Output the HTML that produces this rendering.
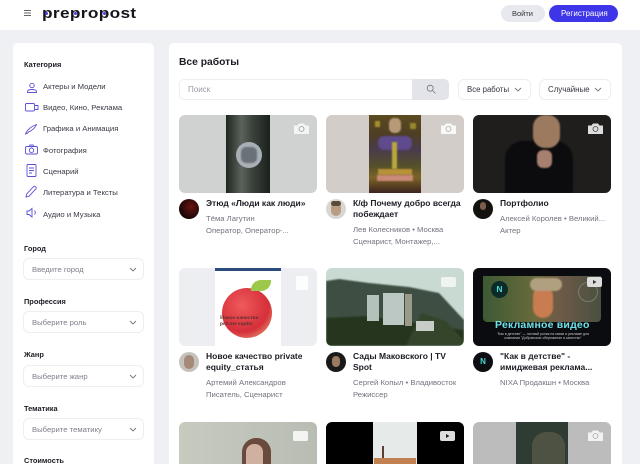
<!DOCTYPE html>
<html><head><meta charset="utf-8">
<style>
*{box-sizing:border-box;margin:0;padding:0}
html,body{width:640px;height:464px;overflow:hidden;background:#eff0f4;font-family:"Liberation Sans",sans-serif}
#w{position:relative;width:640px;height:464px;overflow:hidden;background:#eff0f4}
.a{position:absolute}
.t{position:absolute;white-space:nowrap}
.cat{font-size:7.7px;color:#3a3a44;left:43px}
.lab{font-size:7.4px;font-weight:bold;color:#1c1c24;left:24px}
.sel{position:absolute;left:23px;width:121px;height:22px;background:#fff;border:1px solid #eceef2;border-radius:6px}
.sel span{position:absolute;left:8px;top:5.500px;font-size:7.700px;color:#7d7f8c;white-space:nowrap}
.ch{position:absolute;width:8px;height:5px}
.img{position:absolute;width:138px;height:78px;border-radius:6px;overflow:hidden}
.r3{height:42px;border-radius:6px 6px 0 0}
.ti{font-size:8.500px;font-weight:bold;color:#1c1c24;line-height:11px;position:absolute;white-space:nowrap}
.su{font-size:7.700px;color:#72747f;position:absolute;white-space:nowrap}
.av{position:absolute;width:20px;height:20px;border-radius:50%;overflow:hidden}
svg{display:block}
.ov{position:absolute;right:8px;top:8px}
.b{filter:blur(.7px)}
</style></head><body><div id="w">

<div class="a" style="left:0;top:0;width:640px;height:30px;background:#fff"></div>
<svg class="a" style="left:23px;top:9px" width="9" height="8"><path d="M1 1.500H8M1 4H8M1 6.500H8" stroke="#666" stroke-width=".9"/></svg>
<div class="t" style="left:41.500px;top:4px;font-size:15px;font-weight:bold;color:#15151c;letter-spacing:.3px;line-height:20px;transform:scaleX(1.15);transform-origin:0 0">prepropost</div>
<div class="a" style="left:45px;top:12px;width:3px;height:3px;border-radius:50%;background:#4a40e0"></div>
<div class="a" style="left:73.500px;top:12px;width:3px;height:3px;border-radius:50%;background:#4a40e0"></div>
<div class="a" style="left:102.500px;top:12px;width:3px;height:3px;border-radius:50%;background:#4a40e0"></div>
<div class="a" style="left:501px;top:5px;width:44px;height:17px;border-radius:9px;background:#e8e9ee"></div>
<div class="t" style="left:512px;top:9px;font-size:7.500px;color:#33333d">Войти</div>
<div class="a" style="left:549px;top:5px;width:69px;height:17px;border-radius:9px;background:#3f35e8"></div>
<div class="t" style="left:561px;top:9px;font-size:8px;color:#fff">Регистрация</div>

<!-- sidebar -->
<div class="a" style="left:13px;top:43px;width:141px;height:421px;background:#fff;border-radius:5px 5px 0 0"></div>
<div class="lab t" style="top:60px">Категория</div>
<div class="t cat" style="top:82px">Актеры и Модели</div>
<div class="t cat" style="top:103px">Видео, Кино, Реклама</div>
<div class="t cat" style="top:124px">Графика и Анимация</div>
<div class="t cat" style="top:146px">Фотография</div>
<div class="t cat" style="top:167px">Сценарий</div>
<div class="t cat" style="top:188px">Литература и Тексты</div>
<div class="t cat" style="top:210px">Аудио и Музыка</div>
<svg class="a" style="left:24px;top:79px" width="16" height="148" fill="none" stroke="#5b50d6" stroke-width=".9">
<circle cx="8" cy="6.500" r="2.200"/><path d="M3.500 13.500v-1c0-1.300 2-2 4.500-2s4.500.7 4.500 2v1z"/>
<rect x="1.500" y="24.500" width="9" height="7.500" rx="1.200"/><path d="M10.500 26.500h3.500v4h-3.500"/>
<path d="M1.500 55c2-5 7-8 11-9.500-1.500 3.500-5 6.500-8 7.500-.5 1-1.500 1.500-3 2z"/>
<rect x="1.500" y="67.500" width="12" height="7.500" rx="1.500"/><circle cx="7.500" cy="71.200" r="2.200"/><path d="M5 67.500l1-1.500h3l1 1.500"/>
<rect x="3" y="85.500" width="9" height="12" rx="1"/><path d="M5 89h5M5 91.500h5M5 94h3"/>
<path d="M2 118l.7-3 7-7.500c1-1 3.300 1 2.300 2.200l-7 7.500z"/>
<path d="M3 132v3.500h2l3 2.500v-8.500l-3 2.500zM10.500 131.500c1 1 1 3 0 4"/>
</svg>

<div class="lab t" style="top:244px">Город</div>
<div class="sel" style="top:258px"><span>Введите город</span><svg class="ch" style="right:6px;top:8px" viewBox="0 0 8 5"><path d="M1 1l3 3 3-3" fill="none" stroke="#777" stroke-width=".9"/></svg></div>
<div class="lab t" style="top:297px">Профессия</div>
<div class="sel" style="top:311px"><span>Выберите роль</span><svg class="ch" style="right:6px;top:8px" viewBox="0 0 8 5"><path d="M1 1l3 3 3-3" fill="none" stroke="#777" stroke-width=".9"/></svg></div>
<div class="lab t" style="top:350px">Жанр</div>
<div class="sel" style="top:365px"><span>Выберите жанр</span><svg class="ch" style="right:6px;top:8px" viewBox="0 0 8 5"><path d="M1 1l3 3 3-3" fill="none" stroke="#777" stroke-width=".9"/></svg></div>
<div class="lab t" style="top:404px">Тематика</div>
<div class="sel" style="top:418px"><span>Выберите тематику</span><svg class="ch" style="right:6px;top:8px" viewBox="0 0 8 5"><path d="M1 1l3 3 3-3" fill="none" stroke="#777" stroke-width=".9"/></svg></div>
<div class="a" style="left:24px;top:457px;width:100px;height:7px;overflow:hidden;font-size:7.400px;line-height:7px;font-weight:bold;color:#1c1c24;white-space:nowrap">Стоимость</div>

<!-- main -->
<div class="a" style="left:169px;top:43px;width:453px;height:421px;background:#fff;border-radius:5px 5px 0 0"></div>
<div class="t" style="left:179px;top:57px;font-size:10.300px;font-weight:bold;color:#1c1c24">Все работы</div>
<div class="a" style="left:179px;top:79px;width:270px;height:21px;border:1px solid #eceef2;border-radius:5px;background:#fff"></div>
<div class="a" style="left:412px;top:79px;width:37px;height:21px;background:#e3e4e9;border-radius:0 5px 5px 0"></div>
<svg class="a" style="left:426px;top:84px" width="10" height="10" fill="none" stroke="#777" stroke-width=".8"><circle cx="4.200" cy="4.200" r="3"/><path d="M6.500 6.500l3 3"/></svg>
<div class="t" style="left:188px;top:85px;font-size:8px;color:#9a9ca6">Поиск</div>
<div class="a" style="left:458px;top:79px;width:73px;height:21px;border:1px solid #eceef2;border-radius:6px"></div>
<div class="t" style="left:467px;top:85px;font-size:7.800px;color:#33333d">Все работы</div>
<svg class="a" style="left:514px;top:87px" width="8" height="5"><path d="M1 1l3 3 3-3" fill="none" stroke="#777" stroke-width=".9"/></svg>
<div class="a" style="left:539px;top:79px;width:72px;height:21px;border:1px solid #eceef2;border-radius:6px"></div>
<div class="t" style="left:548px;top:85px;font-size:7.900px;color:#33333d">Случайные</div>
<svg class="a" style="left:594px;top:87px" width="8" height="5"><path d="M1 1l3 3 3-3" fill="none" stroke="#777" stroke-width=".9"/></svg>

<!-- row 1 -->
<div class="img" style="left:179px;top:115px;background:#d0d2d1">
 <div class="a" style="left:47px;top:0;width:44px;height:78px;background:linear-gradient(90deg,#1e2620,#5c625c 35%,#3b423c 60%,#1a201b)"></div>
 <div class="a" style="left:57px;top:27px;width:26px;height:26px;border-radius:50%;background:#a9b0b5"></div>
 <div class="a b" style="left:62px;top:32px;width:16px;height:16px;background:#6a7278;border-radius:5px"></div>
 <svg class="ov" width="15" height="11" viewBox="0 0 15 11"><path d="M0 2.500h3.500L5 .5h5l1.500 2H15V11H0z" fill="#fff" fill-opacity=".75"/><circle cx="7.500" cy="6" r="2.500" fill="none" stroke="#999" stroke-width=".8"/></svg>
</div>
<div class="av" style="left:179px;top:199px;background:radial-gradient(circle at 60% 40%,#6a1410,#180606 70%)"></div>
<div class="ti" style="left:206px;top:198px">Этюд «Люди как люди»</div>
<div class="su" style="left:206px;top:214px">Тёма Лагутин</div>
<div class="su" style="left:206px;top:225.500px">Оператор, Оператор-...</div>

<div class="img" style="left:326px;top:115px;background:#d2cdc8">
 <div class="a" style="left:43px;top:0;width:52px;height:78px;background:linear-gradient(180deg,#5c4a20,#4e3e24 25%,#4a3c4c 45%,#54502a 65%,#7c6428 80%,#3c2420)"></div>
 <div class="a b" style="left:63px;top:3px;width:12px;height:15px;border-radius:5px;background:#b89a78"></div>
 <div class="a b" style="left:52px;top:21px;width:34px;height:14px;border-radius:6px;background:#5e4a8c"></div>
 <div class="a b" style="left:66px;top:27px;width:5px;height:27px;background:#b8a83c"></div>
 <div class="a b" style="left:52px;top:54px;width:34px;height:6px;background:#b89238"></div>
 <div class="a b" style="left:51px;top:60px;width:36px;height:6px;background:#c98a78"></div>
 <div class="a b" style="left:49px;top:6px;width:5px;height:6px;background:#a89030"></div>
 <div class="a b" style="left:84px;top:8px;width:6px;height:6px;background:#98882c"></div>
 <svg class="ov" width="15" height="11" viewBox="0 0 15 11"><path d="M0 2.500h3.500L5 .5h5l1.500 2H15V11H0z" fill="#fff" fill-opacity=".85"/><circle cx="7.500" cy="6" r="2.500" fill="none" stroke="#aaa" stroke-width=".8"/></svg>
</div>
<div class="av" style="left:326px;top:199px;background:#d8d8d2"><div class="a" style="left:5px;top:3px;width:10px;height:14px;border-radius:5px;background:#b89c84"></div><div class="a" style="left:5px;top:2px;width:10px;height:5px;border-radius:4px;background:#5a4a3a"></div></div>
<div class="ti" style="left:353px;top:198px">К/ф Почему добро всегда<br>побеждает</div>
<div class="su" style="left:353px;top:225px">Лев Колесников • Москва</div>
<div class="su" style="left:353px;top:237px">Сценарист, Монтажер,...</div>

<div class="img" style="left:473px;top:115px;background:#1f1e1c">
 <div class="a b" style="left:32px;top:26px;width:68px;height:52px;border-radius:18px 18px 0 0;background:#0c0c0e"></div>
 <div class="a b" style="left:60px;top:0;width:27px;height:33px;border-radius:12px;background:#9c7a60"></div>
 <div class="a b" style="left:64px;top:35px;width:15px;height:18px;border-radius:6px;background:#a88070"></div>
 <svg class="ov" width="15" height="11" viewBox="0 0 15 11"><path d="M0 2.500h3.500L5 .5h5l1.500 2H15V11H0z" fill="#ddd"/><circle cx="7.500" cy="6" r="2.500" fill="none" stroke="#444" stroke-width=".8"/></svg>
</div>
<div class="av" style="left:473px;top:199px;background:#14120f"><div class="a" style="left:7px;top:3px;width:6px;height:8px;border-radius:3px;background:#7c5c4c"></div></div>
<div class="ti" style="left:500px;top:198px">Портфолио</div>
<div class="su" style="left:500px;top:214px">Алексей Королев • Великий...</div>
<div class="su" style="left:500px;top:225.500px">Актер</div>

<!-- row 2 -->
<div class="img" style="left:179px;top:268px;background:#eceef2">
 <div class="a" style="left:36px;top:0;width:66px;height:78px;background:#fff"></div>
 <div class="a" style="left:36px;top:0;width:66px;height:3px;background:#2c4a7c"></div>
 <div class="a" style="left:43px;top:20px;width:50px;height:50px;border-radius:50%;background:radial-gradient(circle at 40% 35%,#ee5a5c,#d62f3a 60%,#e8c488)"></div>
 <div class="a" style="left:72px;top:12px;width:20px;height:11px;border-radius:10px 0 10px 0;background:#9cc94a"></div>
 <div class="a" style="left:41px;top:47px;width:42px;height:13px;font-family:'Liberation Serif',serif;font-size:5.500px;font-weight:bold;line-height:6px;color:#5e3030;white-space:nowrap">Новое качество<br>private equity</div>
 <div class="a" style="left:117px;top:8px;width:12px;height:14px;border-radius:1px;background:#fff;opacity:.85"></div>
</div>
<div class="av" style="left:179px;top:352px;background:#c4c2bc"><div class="a" style="left:5px;top:3px;width:10px;height:14px;border-radius:5px;background:#a68a78"></div></div>
<div class="ti" style="left:206px;top:351px">Новое качество private<br>equity_статья</div>
<div class="su" style="left:206px;top:378px">Артемий Александров</div>
<div class="su" style="left:206px;top:389.500px">Писатель, Сценарист</div>

<div class="img" style="left:326px;top:268px;background:#c8dad2">
 <svg class="a b" style="left:0;top:0" width="138" height="78">
  <path d="M0 13L13 11 43 15 83 19 113 25 138 52V78H0z" fill="#3e4e42"/>
  <path d="M0 50L40 48 90 55 138 62V78H0z" fill="#26361e"/>
  <path d="M95 45l25 8 18 20v5H80z" fill="#34452c"/>
 </svg>
 <div class="a" style="left:41px;top:27px;width:12px;height:26px;background:#b4c2bc"></div>
 <div class="a" style="left:57px;top:25px;width:21px;height:32px;background:#bcc8c4"></div>
 <div class="a" style="left:79px;top:26px;width:7px;height:32px;background:#9c9a88"></div>
 <div class="a" style="left:90px;top:53px;width:18px;height:10px;background:#c8ccc8"></div>
 <div class="a" style="left:115px;top:9px;width:15px;height:10px;border-radius:2px;background:#fff;opacity:.7"></div>
</div>
<div class="av" style="left:326px;top:352px;background:#1a1a18"><div class="a" style="left:6px;top:4px;width:8px;height:11px;border-radius:4px;background:#9a7a60"></div></div>
<div class="ti" style="left:353px;top:351px">Сады Маковского | TV<br>Spot</div>
<div class="su" style="left:353px;top:378px">Сергей Копыл • Владивосток</div>
<div class="su" style="left:353px;top:389.500px">Режиссер</div>

<div class="img" style="left:473px;top:268px;background:#0a0c10">
 <div class="a" style="left:10px;top:8px;width:118px;height:46px;background:linear-gradient(90deg,#3c5a34,#6a6a3c 45%,#6e5a48 65%,#4a5040);border-radius:0 0 4px 4px"></div>
 <div class="a b" style="left:60px;top:18px;width:20px;height:32px;border-radius:10px;background:#c87c50"></div>
 <div class="a b" style="left:57px;top:10px;width:32px;height:13px;border-radius:8px;background:#b0a080"></div>
 <div class="a" style="left:18px;top:13px;width:17px;height:17px;border-radius:50%;background:#0c2a28;color:#4ad8d0;font-size:8.500px;font-weight:bold;text-align:center;line-height:17px">N</div>
 <div class="a" style="left:105px;top:14px;width:20px;height:20px;border-radius:50%;border:1px solid #8a9a8a;opacity:.6"></div>
 <div class="t" style="left:22px;top:51px;font-size:10.500px;font-weight:bold;color:#6fe2e6;letter-spacing:.2px">Рекламное видео</div>
 <div class="t" style="left:20px;top:64px;font-size:3.500px;line-height:4px;color:#c8c8c8;text-align:center;width:100px;white-space:normal">"Как в детстве" — личный ролик на связи и рекламе для компании "Добрянское сбережение и качество"</div>
 <svg class="ov" style="right:9px;top:9px" width="15" height="10"><rect width="15" height="10" rx="2" fill="#ddd"/><path d="M6 3v4l3.500-2z" fill="#333"/></svg>
</div>
<div class="av" style="left:473px;top:352px;background:#0c0e12;color:#4ad8d0;font-size:8px;font-weight:bold;text-align:center;line-height:20px">N</div>
<div class="ti" style="left:500px;top:351px">"Как в детстве" -<br>имиджевая реклама...</div>
<div class="su" style="left:500px;top:378px">NIXA Продакшн • Москва</div>

<!-- row 3 -->
<div class="img r3" style="left:179px;top:422px;background:linear-gradient(90deg,#c6cabf,#b8bdb4)">
 <div class="a" style="left:63px;top:16px;width:29px;height:26px;border-radius:14px 14px 0 0;background:#6a4a3c"></div>
 <div class="a" style="left:67px;top:22px;width:17px;height:20px;border-radius:8px 8px 0 0;background:#d0b0a0"></div>
 <div class="a" style="right:9px;top:9px;width:15px;height:10px;border-radius:2px;background:#f4f4f0"></div>
</div>
<div class="img r3" style="left:326px;top:422px;background:#000">
 <div class="a" style="left:47px;top:0;width:44px;height:42px;background:#e6ebea"></div>
 <div class="a" style="left:48px;top:36px;width:42px;height:6px;background:#c08050"></div>
 <div class="a" style="left:56px;top:24px;width:2px;height:12px;background:#5a4030"></div>
 <svg class="ov" style="right:9px;top:9px" width="15" height="10"><rect width="15" height="10" rx="2" fill="#ddd"/><path d="M6 3v4l3.500-2z" fill="#222"/></svg>
</div>
<div class="img r3" style="left:473px;top:422px;background:#bcbcbc">
 <div class="a" style="left:43px;top:0;width:52px;height:42px;background:#2e3c34"></div>
 <div class="a" style="left:59px;top:10px;width:33px;height:32px;border-radius:14px 14px 0 0;background:#4e5242"></div>
 <svg class="ov" width="15" height="11" viewBox="0 0 15 11"><path d="M0 2.500h3.500L5 .5h5l1.500 2H15V11H0z" fill="#fff" fill-opacity=".8"/><circle cx="7.500" cy="6" r="2.500" fill="none" stroke="#aaa" stroke-width=".8"/></svg>
</div>
</div></body></html>
